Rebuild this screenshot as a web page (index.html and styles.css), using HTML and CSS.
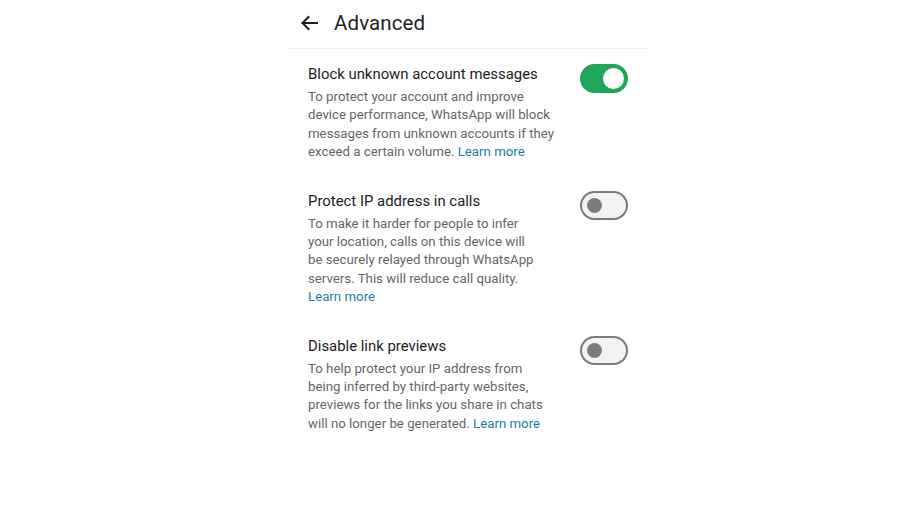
FILE: index.html
```html
<!DOCTYPE html>
<html lang="en">
<head>
<meta charset="utf-8">
<title>Advanced</title>
<link rel="stylesheet" href="styles.css">
</head>
<body>
<div class="screen">
  <header class="topbar">
    <span class="back" aria-label="Back">
      <svg width="18" height="16" viewBox="0 0 18 16"><path d="M17 8H2.5M8.5 2L2.5 8l6 6" fill="none" stroke="#1f1f1f" stroke-width="2" stroke-linecap="square"/></svg>
    </span>
    <h1 class="title">Advanced</h1>
  </header>
  <div class="list">
    <section class="item">
      <div class="text">
        <div class="item-title">Block unknown account messages</div>
        <p class="desc">To protect your account and improve<br>device performance, WhatsApp will block<br>messages from unknown accounts if they<br>exceed a certain volume. <a class="link">Learn more</a></p>
      </div>
      <span class="switch on"><span class="knob"></span></span>
    </section>
    <section class="item">
      <div class="text">
        <div class="item-title">Protect IP address in calls</div>
        <p class="desc">To make it harder for people to infer<br>your location, calls on this device will<br>be securely relayed through WhatsApp<br>servers. This will reduce call quality.<br><a class="link">Learn more</a></p>
      </div>
      <span class="switch"><span class="knob"></span></span>
    </section>
    <section class="item">
      <div class="text">
        <div class="item-title">Disable link previews</div>
        <p class="desc">To help protect your IP address from<br>being inferred by third-party websites,<br>previews for the links you share in chats<br>will no longer be generated. <a class="link">Learn more</a></p>
      </div>
      <span class="switch"><span class="knob"></span></span>
    </section>
  </div>
</div>
</body>
</html>
```
FILE: styles.css
```css
html, body {
  margin: 0;
  padding: 0;
  background: #ffffff;
}
body {
  font-family: Roboto, "Liberation Sans", sans-serif;
  color: #1c1c1c;
}
.screen {
  width: 361px;
  margin-left: 287px;
}
.topbar {
  height: 49px;
  display: flex;
  align-items: center;
  border-bottom: 1px solid #f0f0f0;
  padding-left: 13px;
  padding-bottom: 3px;
  box-sizing: border-box;
}
.back {
  display: flex;
  width: 18px;
  height: 16px;
}
.title {
  margin: 0 0 0 16px;
  font-size: 20.5px;
  font-weight: 400;
  color: #1f1f1f;
  letter-spacing: 0.1px;
}
.list {
  padding-top: 15px;
}
.item {
  display: flex;
  justify-content: space-between;
  align-items: flex-start;
  padding: 0 20px 29.5px 21px;
}
.item-title {
  font-size: 14.9px;
  line-height: 20px;
  color: #1c1c1c;
}
.desc {
  margin: 4px 0 0;
  font-size: 13.25px;
  line-height: 18.3px;
  color: #666666;
}
.link {
  color: #1d7fa3;
}
.switch {
  flex: none;
  width: 48px;
  height: 29px;
  box-sizing: border-box;
  border-radius: 15px;
  border: 2px solid #7b7b7b;
  background: #f3f3f3;
  display: flex;
  align-items: center;
  padding-left: 5px;
}
.switch .knob {
  width: 15px;
  height: 15px;
  border-radius: 50%;
  background: #7b7b7b;
}
.switch.on {
  border-color: #1fa65b;
  background: #1fa65b;
  justify-content: flex-end;
  padding: 0 2px 0 0;
}
.switch.on .knob {
  width: 21px;
  height: 21px;
  background: #ffffff;
}
```
